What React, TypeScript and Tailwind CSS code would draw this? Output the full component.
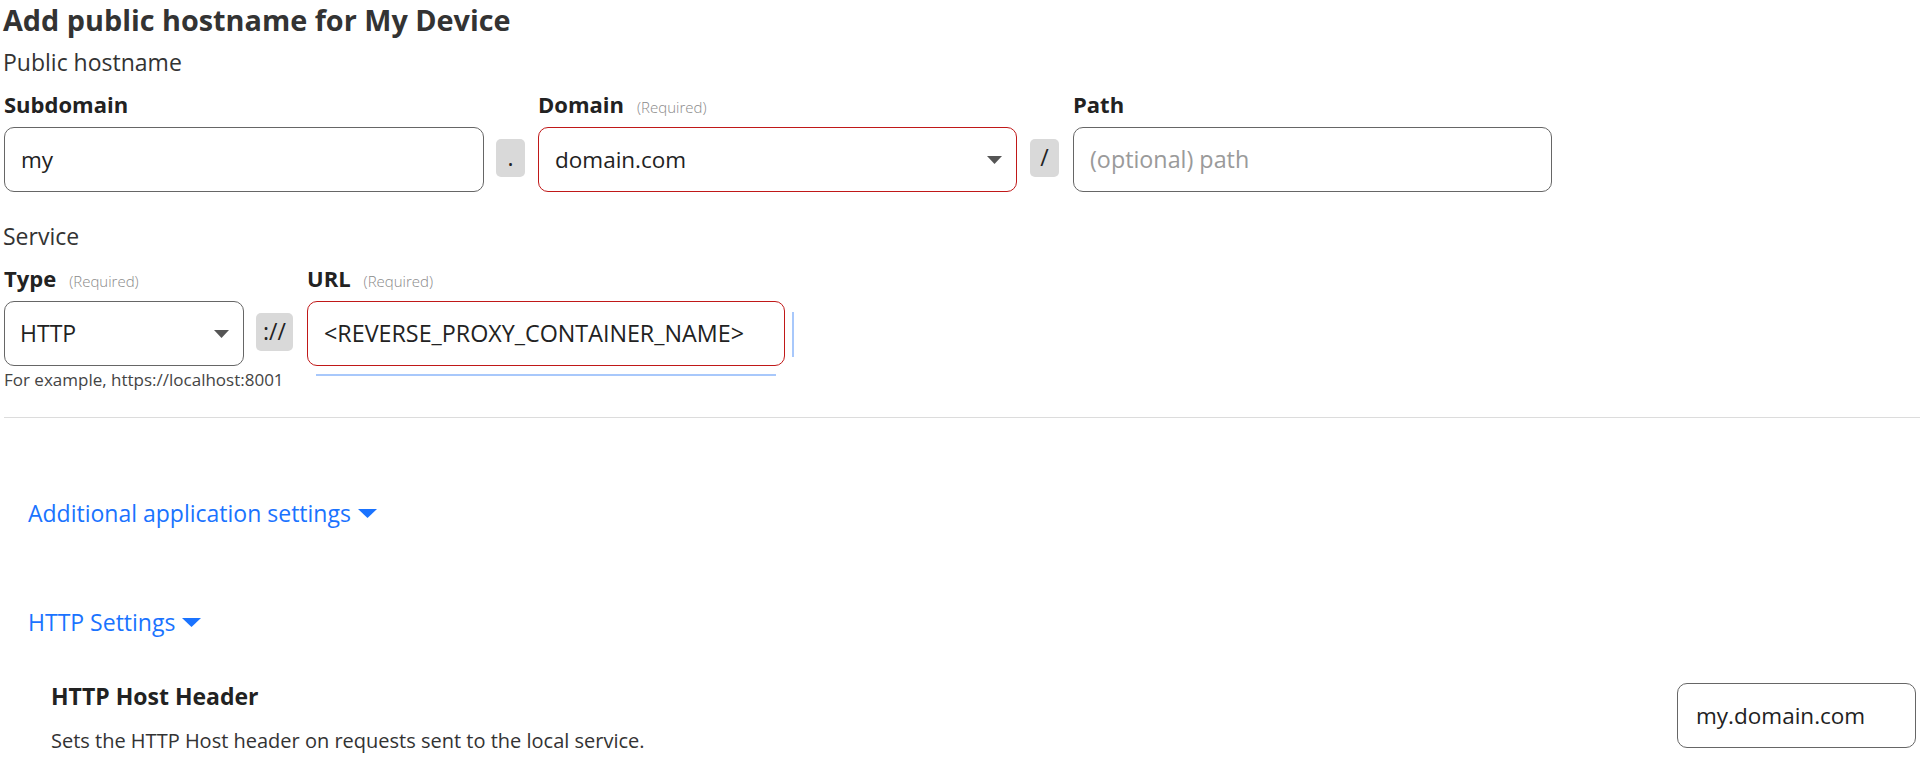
import React from "react";

function Caret({ className }: { className?: string }) {
  return (
    <svg width="15" height="8" viewBox="0 0 15 8" className={className}>
      <polygon points="0,0 15,0 7.5,8" fill="#555555" />
    </svg>
  );
}

function BlueCaret() {
  return (
    <svg width="19" height="9" viewBox="0 0 19 9" className="ml-[7px] shrink-0">
      <polygon points="0,0 19,0 9.5,9" fill="#1a73ff" />
    </svg>
  );
}

function Sep({ text, w }: { text: string; w: string }) {
  return (
    <div
      className={`${w} h-[38px] self-center mb-[4px] rounded-[5px] bg-[#d9d9d9] flex items-center justify-center text-[23px] text-[#222] leading-none`}
    >
      {text}
    </div>
  );
}

function Label({ text, required }: { text: string; required?: boolean }) {
  return (
    <div className="flex items-baseline h-[28px]">
      <span className="text-[22px] leading-[28px] font-bold text-[#222]">{text}</span>
      {required && (
        <span className="ml-[13px] text-[15px] leading-[20px] text-[#8a8a8a] font-light">(Required)</span>
      )}
    </div>
  );
}

export default function App() {
  return (
    <div className="w-[1920px] h-[760px] overflow-hidden bg-white font-['Open_Sans',sans-serif] text-[#333]">
      <div className="pl-[3px]">
        <h1 className="pt-[3px] text-[28.8px] leading-[34px] font-bold text-[#333]">Add public hostname for My Device</h1>
        <div className="mt-[11px] text-[23px] leading-[28px] text-[#333]">Public hostname</div>

        {/* hostname row */}
        <div className="mt-[14px] flex items-start pl-[1px]">
          <div className="w-[480px]">
            <Label text="Subdomain" />
            <div className="mt-[9px] h-[65px] rounded-[10px] border border-[#666] flex items-center px-[16px] text-[22.5px] text-[#222]">
              my
            </div>
          </div>
          <div className="ml-[12px] mt-[37px] h-[65px] flex items-center">
            <Sep text="." w="w-[29px]" />
          </div>
          <div className="ml-[13px] w-[479px]">
            <Label text="Domain" required />
            <div className="mt-[9px] h-[65px] rounded-[10px] border border-[#c01818] flex items-center justify-between pl-[16px] pr-[14px] text-[22.5px] text-[#222]">
              <span>domain.com</span>
              <Caret />
            </div>
          </div>
          <div className="ml-[13px] mt-[37px] h-[65px] flex items-center">
            <Sep text="/" w="w-[29px]" />
          </div>
          <div className="ml-[14px] w-[479px]">
            <Label text="Path" />
            <div className="mt-[9px] h-[65px] rounded-[10px] border border-[#666] flex items-center px-[16px] text-[23.3px] text-[#9a9a9a]">
              (optional) path
            </div>
          </div>
        </div>

        <div className="mt-[30px] text-[23px] leading-[28px] text-[#333]">Service</div>

        {/* service row */}
        <div className="mt-[14px] flex items-start pl-[1px]">
          <div className="w-[240px]">
            <Label text="Type" required />
            <div className="mt-[9px] h-[65px] rounded-[10px] border border-[#666] flex items-center justify-between pl-[15px] pr-[14px] text-[23px] text-[#222]">
              <span>HTTP</span>
              <Caret />
            </div>
            <div className="mt-[4px] text-[17px] leading-[20px] text-[#444] whitespace-nowrap">
              For example, https://localhost:8001
            </div>
          </div>
          <div className="ml-[12px] mt-[37px] h-[65px] flex items-center">
            <Sep text="://" w="w-[37px]" />
          </div>
          <div className="ml-[14px] w-[478px]">
            <Label text="URL" required />
            <div className="mt-[9px] h-[65px] rounded-[10px] border border-[#c01818] flex items-center px-[16px] text-[23.3px] text-[#222] whitespace-nowrap">
              &lt;REVERSE_PROXY_CONTAINER_NAME&gt;
            </div>
            <div className="mt-[8px] mx-[9px] h-[2px] bg-[#a8c8fb]" />
          </div>
          <div className="ml-[7px] mt-[48px] w-[2px] h-[45px] bg-[#a8c8fb]" />
        </div>
      </div>

      <div className="mt-[27px] ml-[4px] h-px bg-[#dcdcdc]" />

      <div className="pl-[28px]">
        <div className="mt-[81px] flex items-center h-[28px] text-[23px] leading-[28px] text-[#1a73ff]">
          <span>Additional application settings</span>
          <BlueCaret />
        </div>
        <div className="mt-[81px] flex items-center h-[28px] text-[23px] leading-[28px] text-[#1a73ff]">
          <span>HTTP Settings</span>
          <BlueCaret />
        </div>
      </div>

      <div className="mt-[46px] pl-[51px] pr-[4px] flex items-start justify-between">
        <div>
          <div className="text-[23px] leading-[28px] font-bold text-[#222]">HTTP Host Header</div>
          <div className="mt-[19px] text-[20px] leading-[24px] text-[#333]">
            Sets the HTTP Host header on requests sent to the local service.
          </div>
        </div>
        <div className="mt-px w-[239px] h-[65px] rounded-[10px] border border-[#666] flex items-center px-[18px] text-[22.5px] text-[#222]">
          my.domain.com
        </div>
      </div>
    </div>
  );
}
